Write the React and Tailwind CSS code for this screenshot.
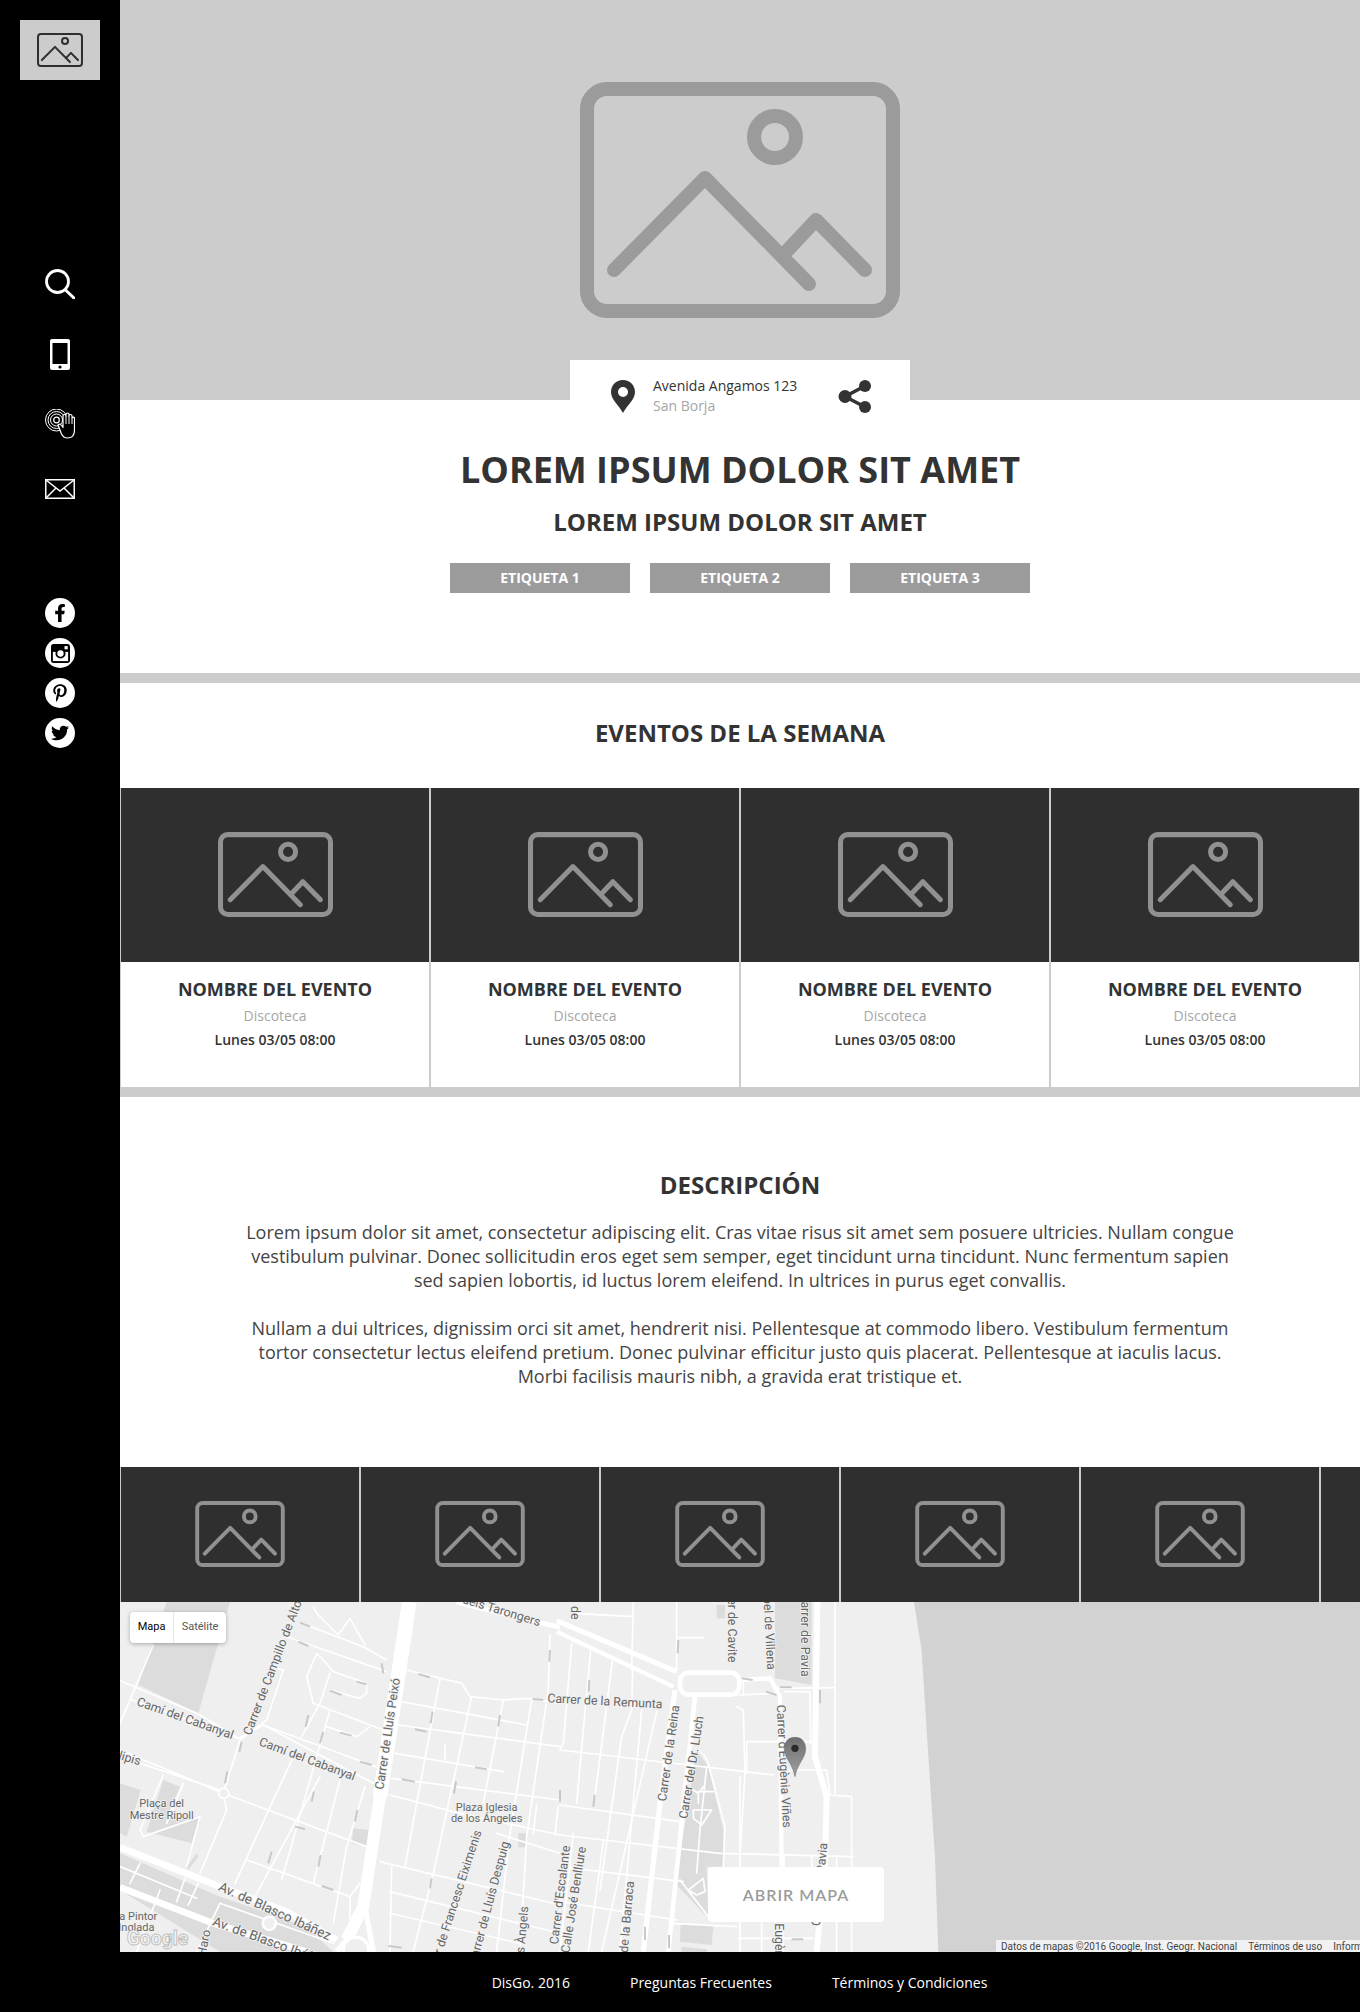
import { FaFacebookF, FaPinterestP, FaTwitter } from 'react-icons/fa';

function Placeholder({ className }) {
  return (
    <svg viewBox="0 0 320 236" fill="none" stroke="currentColor" strokeWidth="14" strokeLinecap="round" strokeLinejoin="round" className={className}>
      <rect x="7" y="7" width="306" height="222" rx="20" />
      <circle cx="195" cy="55" r="21" />
      <path d="M34 188 L125 96 L229 202" />
      <path d="M205 171 L236 138 L285 188" />
    </svg>
  );
}

function InstagramGlyph() {
  return (
    <svg width="19" height="19" viewBox="0 0 18 18">
      <rect width="18" height="18" rx="2.5" fill="black" />
      <rect x="1.8" y="7.5" width="14.4" height="8.7" fill="white" />
      <circle cx="9" cy="9" r="4.8" fill="black" />
      <circle cx="9" cy="9" r="3" fill="white" />
      <rect x="12.8" y="2" width="3" height="3" fill="white" />
    </svg>
  );
}

function SideIcons() {
  return (
    <div className="flex flex-col items-center text-white">
      <svg width="30" height="30" viewBox="0 0 30 30" fill="none" stroke="white" className="mt-[189px]">
        <circle cx="12.5" cy="12.5" r="11" strokeWidth="2.8" />
        <path d="M20.5 21 L29 29" strokeWidth="3" strokeLinecap="round" />
      </svg>
      <svg width="20" height="31" viewBox="0 0 20 31" className="mt-10">
        <rect width="20" height="31" rx="2" fill="white" />
        <rect x="2.5" y="4" width="15" height="21" fill="black" />
        <circle cx="10" cy="28" r="1.6" fill="black" />
      </svg>
      <svg width="30" height="30" viewBox="0 0 30 30" fill="none" stroke="white" className="mt-[39px]">
        <circle cx="11.5" cy="11" r="11" strokeWidth="1" />
        <circle cx="11.5" cy="11" r="8.5" strokeWidth="1" />
        <circle cx="11.5" cy="11" r="6" strokeWidth="1" />
        <circle cx="11.5" cy="11" r="2.8" strokeWidth="1.2" />
        <path d="M13 16 Q15 14 17 17 L18 18.5 L18 7 A1.5 1.5 0 0 1 21 7 L21 5.5 A1.5 1.5 0 0 1 24 5.5 L24 7 A1.5 1.5 0 0 1 27 7 L27 9 A1.3 1.3 0 0 1 29.5 9 L29.5 21 Q29.5 29 22.5 29 Q18.5 29 16.5 25 Z" fill="black" strokeWidth="1.2" strokeLinejoin="round" />
        <path d="M21 7 L21 15 M24 7 L24 15 M27 9 L27 15" strokeWidth="1" />
      </svg>
      <svg width="30" height="20" viewBox="0 0 30 20" fill="none" stroke="white" strokeWidth="1.5" className="mt-10">
        <rect x="0.75" y="0.75" width="28.5" height="18.5" />
        <path d="M1 1 L15 12 L29 1 M1 19 L11 9 M29 19 L19 9" />
      </svg>
      <div className="mt-[99px] flex flex-col gap-2.5">
        <div className="w-[30px] h-[30px] rounded-full bg-white flex items-center justify-center text-black">
          <FaFacebookF size={18} />
        </div>
        <div className="w-[30px] h-[30px] rounded-full bg-white flex items-center justify-center text-black">
          <InstagramGlyph />
        </div>
        <div className="w-[30px] h-[30px] rounded-full bg-white flex items-center justify-center text-black">
          <FaPinterestP size={18} />
        </div>
        <div className="w-[30px] h-[30px] rounded-full bg-white flex items-center justify-center text-black">
          <FaTwitter size={18} />
        </div>
      </div>
    </div>
  );
}

const minor4 = [
  'M0 272 L235 372 L355 445 L430 405 L780 535',
  'M30 328 L355 445',
  'M100 165 L0 400',
  'M430 405 L760 580',
  'M810 615 L1000 665 L1320 735',
  'M490 240 L440 390 L360 450 L310 610 L320 660 L240 850',
  'M490 240 L470 235',
  'M0 480 L310 610 L430 655 L740 770',
  'M0 500 L300 600',
  'M780 815 L1320 945',
  'M545 100 L730 170 L800 210',
  'M500 140 L800 245',
  'M580 50 L590 70 L655 135 M690 85 L655 135 M690 85 L735 165',
  'M860 240 L1025 280 L1050 320 L1150 330 L1230 325 L1320 340',
  'M1150 330 L1090 640',
  'M845 335 L1220 405',
  'M835 405 L1320 470',
  'M825 490 L1150 545',
  'M975 465 L975 510',
  'M815 565 L1320 630',
  'M960 265 L855 830',
  'M1055 320 L940 850 L880 1085',
  'M1235 330 L1170 730 L1130 1085',
  'M1290 135 L1285 300 L1220 740 L1200 1085',
  'M630 250 L600 340 L545 440',
  'M580 340 L560 260 L590 190 L610 210 L640 245 L740 280 L740 310 L720 325 L630 300',
  'M580 340 L790 420',
  'M630 360 L485 870',
  'M620 410 L710 440 L750 410',
  'M600 560 L400 930',
  'M735 590 L680 770 L640 1000',
  'M660 570 L580 880',
  'M520 500 L345 880',
  'M380 810 L690 920',
  'M815 830 L810 1085',
  'M810 905 L1320 1030',
  'M810 970 L1200 1060',
  'M130 555 L60 720 L70 740 L240 680 L200 830',
  'M190 580 L140 700',
  'M120 900 L50 1085',
  'M300 940 L230 1085',
  'M720 880 L690 920 L690 990',
  'M1130 730 L1320 790',
  'M1250 645 L1240 730 M1315 650 L1305 735',
];

const arrows4 = [
  'M540 98 L570 110', 'M535 155 L565 168', 'M785 220 L790 250', 'M895 252 L930 262', 'M1238 327 L1270 330',
  'M1290 180 L1288 215', 'M710 275 L740 283', 'M630 302 L665 315', 'M938 365 L932 400', 'M1140 375 L1135 410',
  'M565 375 L557 410', 'M610 425 L600 460', 'M660 428 L695 437', 'M885 418 L920 425', 'M365 455 L358 485',
  'M322 545 L315 580', 'M720 515 L755 525', 'M1065 532 L1100 538', 'M845 568 L885 575', 'M1008 575 L1002 610',
  'M582 605 L575 635', 'M712 660 L705 695', 'M525 710 L555 717', 'M455 785 L445 820', 'M602 795 L595 830',
  'M605 888 L640 900', 'M935 865 L930 895', 'M805 1068 L845 1073',
];

const minor5 = [
  'M45 70 L220 80', 'M220 36 L215 240', 'M350 36 L350 240', 'M355 143 L430 143',
  'M35 160 L10 460 L0 480', 'M92 180 L50 640', 'M158 205 L105 620', 'M218 240 L215 360 L185 440 L120 900',
  'M0 480 L640 555', 'M530 350 L550 360 L555 550 L540 800', 'M560 455 L560 550', 'M560 455 L750 455',
  'M675 305 L750 305 L752 460', 'M675 540 L800 540 L810 615 L875 620 L875 1085', 'M825 36 L825 610',
  'M530 315 L650 310', 'M540 265 L640 270', 'M650 295 L825 293',
  'M550 270 L550 315', 'M0 645 L360 695', 'M0 735 L480 790 L880 800', 'M0 830 L370 875', 'M0 935 L350 990',
  'M245 360 L180 1085', 'M290 365 L125 1085', 'M40 730 L0 1085', 'M130 755 L85 1085',
  'M410 480 Q440 490 450 540 L495 710 L490 830', 'M440 530 L420 720 L410 850',
  'M400 600 L415 610 L430 590 M415 610 L415 640 M415 605 L460 605',
  'M400 660 L455 660 L425 705 L400 685 Z', 'M360 870 L445 980', 'M385 900 L430 865 L435 905 L410 915 Z',
  'M540 560 L540 1085', 'M605 1000 L605 1085', 'M535 1045 L760 1045', 'M330 1000 L530 1010', 'M672 800 L672 830 M755 800 L755 830', 'M830 800 L830 1085',
];

function StreetMap() {
  const textProps = { fontFamily: 'Roboto, sans-serif', fontSize: 37, fill: '#666', stroke: '#f2f2f2', strokeWidth: 5, paintOrder: 'stroke' };
  return (
    <svg viewBox="0 0 1240 350" width="1240" height="350" className="block">
      <rect width="1240" height="350" fill="#efefef" />
      <g transform="translate(0,-12) scale(0.3333)">
        <g fill="#dcdcdc">
          <path d="M140 36 L330 36 L235 370 L55 285 Z" />
          <path d="M0 580 L62 600 L20 740 L0 730 Z" />
          <path d="M130 570 L180 590 L140 680 L240 680 L215 760 L80 725 Z" />
          <path d="M200 830 L230 790 L235 800 L205 840 Z" />
          <path d="M0 790 L300 920 L560 1010 L640 1085 L300 1085 L0 900 Z" />
          <path d="M700 715 L745 720 L740 770 L695 760 Z" />
          <path d="M1195 730 L1220 730 L1218 772 L1195 772 Z" />
        </g>
        <g fill="none" stroke="#fff" strokeWidth="5" strokeLinecap="round" strokeLinejoin="round">
          {minor4.map((d) => <path key={d} d={d} />)}
          <path d="M30 880 L60 820 M170 935 L195 865 M205 945 L235 880 M0 830 L230 925 M300 940 L640 1060" />
          <circle cx="311" cy="610" r="15" fill="#efefef" />
          <circle cx="448" cy="1000" r="20" fill="#efefef" strokeWidth="7" />
        </g>
        <g fill="none" stroke="#fff" strokeLinejoin="round">
          <path d="M0 772 L300 890 L500 965 L650 1050" strokeWidth="20" />
          <path d="M0 892 L280 1000 L560 1085" strokeWidth="20" />
          <path d="M868 36 L780 620" strokeWidth="44" />
          <path d="M780 620 L748 830 L730 950 L680 1050" strokeWidth="36" />
          <path d="M1010 36 L1320 112" strokeWidth="15" />
          <path d="M735 950 L760 1085 M680 1050 L650 1085" strokeWidth="16" />
          <circle cx="708" cy="1080" r="38" fill="#efefef" strokeWidth="10" />
        </g>
        <g fill="none" stroke="#c8c8c8" strokeWidth="6" strokeLinecap="butt">
          {arrows4.map((d) => <path key={d} d={d} />)}
        </g>
        <g {...textProps}>
          <text transform="translate(48,345) rotate(19.6)">Camí del Cabanyal</text>
          <text transform="translate(415,465) rotate(20.5)">Camí del Cabanyal</text>
          <text transform="translate(392,438) rotate(-69)">Carrer de Campillo de Altobuey</text>
          <text transform="translate(790,600) rotate(-81.5)">Carrer de Lluís Peixó</text>
          <text transform="translate(1025,38) rotate(17)">dels Tarongers</text>
          <text transform="translate(-45,495) rotate(17)">Tulipis</text>
          <text x="125" y="652" textAnchor="middle" fontSize="33">Plaça del</text>
          <text x="125" y="686" textAnchor="middle" fontSize="33">Mestre Ripoll</text>
          <text x="1100" y="662" textAnchor="middle" fontSize="33">Plaza Iglesia</text>
          <text x="1100" y="695" textAnchor="middle" fontSize="33">de los Ángeles</text>
          <text transform="translate(293,900) rotate(24.5)" fontSize="40">Av. de Blasco Ibáñez</text>
          <text transform="translate(275,1005) rotate(20)" fontSize="40">Av. de Blasco Ibáñez</text>
          <text x="-2" y="990" fontSize="33">a Pintor</text>
          <text x="-5" y="1024" fontSize="33">Inglada</text>
          <text transform="translate(1085,725) rotate(-72)" textAnchor="end">Carrer de Francesc Eiximenis</text>
          <text transform="translate(1168,758) rotate(-75)" textAnchor="end">Carrer de Lluís Despuig</text>
          <text transform="translate(1225,950) rotate(-85)" textAnchor="end">dels Àngels</text>
          <text transform="translate(272,1022) rotate(-78)" textAnchor="end">Carrer de Haro</text>
        </g>
        <text x="20" y="1065" fontFamily="Roboto, sans-serif" fontSize="58" fontWeight="700" fill="#f4f4f4" stroke="#bbb" strokeWidth="2.5">Google</text>
      </g>

      <g transform="translate(440,-12) scale(0.3333)">
        <path d="M1062 36 L1085 180 L1100 420 L1125 800 L1135 1085 L1400 1085 L2400 1085 L2400 36 Z" fill="#d2d2d2" />
        <path d="M645 36 L755 36 L755 285 L645 265 Z" fill="#dcdcdc" />
        <path d="M470 45 L495 45 L495 85 L470 85 Z" fill="#dcdcdc" />
        <path d="M410 480 L445 530 L490 720 L490 830 L440 830 L445 985 L345 880 L375 700 Z" fill="#dcdcdc" />
        <path d="M362 1000 L460 1010 L455 1065 L360 1055 Z M365 1070 L440 1078 L440 1090 L365 1090 Z" fill="#dcdcdc" />
        <g fill="none" stroke="#fff" strokeWidth="5" strokeLinecap="round" strokeLinejoin="round">
          {minor5.map((d) => <path key={d} d={d} />)}
        </g>
        <g fill="none" stroke="#fff" strokeLinejoin="round">
          <path d="M-10 92 L350 245" strokeWidth="15" />
          <path d="M-10 125 L340 290" strokeWidth="13" />
          <rect x="360" y="248" width="178" height="66" rx="26" strokeWidth="14" />
          <path d="M538 270 L630 265 L660 320 L665 830 M665 1000 L665 1085" strokeWidth="13" />
          <path d="M772 36 L765 500 L800 620 L795 830 L770 1085" strokeWidth="18" />
          <path d="M345 300 L300 640 L250 1085" strokeWidth="16" />
          <path d="M405 320 L365 700 L325 1085" strokeWidth="14" />
        </g>
        <g fill="none" stroke="#c8c8c8" strokeWidth="6">
          <path d="M355 150 L353 190 M88 270 L86 305 M780 300 L780 340 M0 600 L0 635 M104 615 L100 650" />
          <path d="M545 265 L578 270 M660 292 L695 292 M618 305 L650 315 M695 1048 L730 1048 M255 1010 L255 1050 M327 1035 L327 1075" />
        </g>
        <g {...textProps}>
          <text transform="translate(307,355) rotate(3)" textAnchor="end">Carrer de la Remunta</text>
          <text transform="translate(318,635) rotate(-82)">Carrer de la Reina</text>
          <text transform="translate(382,688) rotate(-81)">Carrer del Dr. Lluch</text>
          <text transform="translate(650,345) rotate(87)">Carrer d'Eugènia Viñes</text>
          <text transform="translate(505,218) rotate(90)" textAnchor="end">Carrer de Cavite</text>
          <text transform="translate(622,240) rotate(87)" textAnchor="end">Isabel de Villena</text>
          <text transform="translate(724,260) rotate(90)" textAnchor="end">Carrer de Pavia</text>
          <text transform="translate(802,760) rotate(-85)" textAnchor="end">Carrer de Pavia</text>
          <text transform="translate(645,1000) rotate(90)">Eugènia</text>
          <text transform="translate(33,48) rotate(90)">de</text>
          <text transform="translate(30,768) rotate(-83)" textAnchor="end">Carrer d'Escalante</text>
          <text transform="translate(78,772) rotate(-81)" textAnchor="end">Calle José Benlliure</text>
          <text transform="translate(222,875) rotate(-85)" textAnchor="end">Carrer de la Barraca</text>
        </g>
        <defs>
          <linearGradient id="pin" x1="0" y1="0" x2="0" y2="1">
            <stop offset="0" stopColor="#6e6e6e" />
            <stop offset="1" stopColor="#a0a0a0" />
          </linearGradient>
        </defs>
        <path d="M705 442 C680 442 673 462 673 476 C673 505 698 520 705 560 C712 520 737 505 737 476 C737 462 730 442 705 442 Z" fill="url(#pin)" stroke="#666" strokeWidth="1.5" />
        <circle cx="705" cy="475" r="11" fill="#2a2a2a" />
      </g>
    </svg>
  );
}

function EventCard() {
  return (
    <div className="w-[310px] h-[299px] border-x border-[#ccc] text-center">
      <div className="h-[174px] pb-[2px] bg-[#2f2f2f] flex items-center justify-center text-[#919191]">
        <Placeholder className="w-[115px] h-[85px]" />
      </div>
      <div className="pt-[15px] text-[18px] leading-[24px] font-bold text-[#333]">NOMBRE DEL EVENTO</div>
      <div className="mt-[5px] text-[14px] leading-[20px] text-[#a6a6a6]">Discoteca</div>
      <div className="mt-[4px] text-[14px] leading-[20px] font-semibold text-[#333]">Lunes 03/05 08:00</div>
    </div>
  );
}

export default function App() {
  return (
    <div className="w-[1360px] h-[2012px] flex font-['Open_Sans',sans-serif] text-[#333] bg-white overflow-hidden">
      <aside className="w-[120px] shrink-0 bg-black flex flex-col items-center pt-5">
        <div className="w-20 h-[60px] bg-[#ccc] flex items-center justify-center text-[#2f2f2f]">
          <Placeholder className="w-[46px] h-[34px]" />
        </div>
        <SideIcons />
      </aside>

      <main className="w-[1240px] flex flex-col">
        <div className="h-[400px] shrink-0 bg-[#ccc] flex justify-center pt-[82px] text-[#9b9b9b]">
          <Placeholder className="w-[320px] h-[236px]" />
        </div>

        <section className="h-[273px] shrink-0 flex flex-col items-center">
          <div className="relative -mt-10 w-[340px] h-20 bg-white flex items-center pl-[41px] pb-2">
            <svg width="24" height="33" viewBox="0 0 24 33">
              <path fillRule="evenodd" d="M12 0 C5 0 0 5.5 0 12 C0 20 8 25 12 33 C16 25 24 20 24 12 C24 5.5 19 0 12 0 Z M12 7 A5 5 0 1 1 12 17 A5 5 0 1 1 12 7 Z" fill="currentColor" />
            </svg>
            <div className="ml-[18px] w-[185px] text-[14px] leading-[20px]">
              <div>Avenida Angamos 123</div>
              <div className="text-[#a6a6a6]">San Borja</div>
            </div>
            <svg width="34" height="33" viewBox="0 0 34 33">
              <path d="M27 6 L7 16.5 L27 27" fill="none" stroke="currentColor" strokeWidth="3.5" />
              <circle cx="27" cy="6" r="6" fill="currentColor" />
              <circle cx="7" cy="16.5" r="6.5" fill="currentColor" />
              <circle cx="27" cy="27" r="6" fill="currentColor" />
            </svg>
          </div>
          <h1 className="mt-[8px] text-[36px] leading-[44px] font-bold">LOREM IPSUM DOLOR SIT AMET</h1>
          <h2 className="mt-[14px] text-[24px] leading-[32px] font-bold">LOREM IPSUM DOLOR SIT AMET</h2>
          <div className="mt-[25px] flex gap-5">
            {['ETIQUETA 1', 'ETIQUETA 2', 'ETIQUETA 3'].map((tag) => (
              <div key={tag} className="w-[180px] h-[30px] pb-[2px] bg-[#9b9b9b] text-white text-[14px] font-bold flex items-center justify-center">
                {tag}
              </div>
            ))}
          </div>
        </section>

        <div className="h-2.5 shrink-0 bg-[#ccc]" />

        <h2 className="pt-[34px] pb-[39px] text-center text-[24px] leading-[32px] font-bold">EVENTOS DE LA SEMANA</h2>
        <div className="flex shrink-0">
          <EventCard />
          <EventCard />
          <EventCard />
          <EventCard />
        </div>

        <div className="h-2.5 shrink-0 bg-[#ccc]" />

        <section className="h-[370px] shrink-0 pt-[72px] text-center">
          <h2 className="text-[24px] leading-[32px] font-bold">DESCRIPCIÓN</h2>
          <div className="mt-[19px] mx-auto w-[1000px] text-[18px] leading-[24px] text-[#444]">
            <p>
              Lorem ipsum dolor sit amet, consectetur adipiscing elit. Cras vitae risus sit amet sem posuere ultricies. Nullam congue vestibulum pulvinar. Donec sollicitudin eros eget sem semper, eget tincidunt urna tincidunt. Nunc fermentum sapien sed sapien lobortis, id luctus lorem eleifend. In ultrices in purus eget convallis.
            </p>
            <p className="mt-6">
              Nullam a dui ultrices, dignissim orci sit amet, hendrerit nisi. Pellentesque at commodo libero. Vestibulum fermentum tortor consectetur lectus eleifend pretium. Donec pulvinar efficitur justo quis placerat. Pellentesque at iaculis lacus. Morbi facilisis mauris nibh, a gravida erat tristique et.
            </p>
          </div>
        </section>

        <div className="h-[135px] shrink-0 flex overflow-hidden">
          {[0, 1, 2, 3, 4, 5].map((i) => (
            <div key={i} className="w-[240px] shrink-0 pb-[2px] bg-[#2f2f2f] border-x border-[#ccc] flex items-center justify-center text-[#919191]">
              <Placeholder className="w-[90px] h-[66px]" />
            </div>
          ))}
        </div>

        <div className="relative h-[350px] shrink-0 overflow-hidden">
          <StreetMap />
          <div className="absolute left-[10px] top-[10px] h-[31px] flex items-center bg-white rounded-sm shadow-[0_1px_4px_rgba(0,0,0,0.3)] font-['Roboto',sans-serif] text-[11px]">
            <span className="w-[44px] h-full flex items-center justify-center text-black border-r border-[#e6e6e6]">Mapa</span>
            <span className="w-[52px] flex items-center justify-center text-[#565656]">Satélite</span>
          </div>
          <div className="absolute left-[588px] top-[265px] w-[176px] h-[55px] bg-white rounded flex items-center justify-center font-['Lato',sans-serif] text-[16px] font-semibold tracking-[1px] text-[#9b9b9b]">
            ABRIR MAPA
          </div>
          <div className="absolute right-0 bottom-0 w-[364px] h-[12px] pl-[5px] bg-[#f1f1f1] flex items-center gap-[11px] whitespace-nowrap overflow-hidden font-['Roboto',sans-serif] text-[10px] text-[#444]">
            <span>Datos de mapas ©2016 Google, Inst. Geogr. Nacional</span>
            <span>Términos de uso</span>
            <span>Informar de un error</span>
          </div>
        </div>

        <footer className="h-[60px] shrink-0 bg-black flex items-center justify-center gap-[60px] pr-[1px] text-[14px] text-white">
          <span>DisGo. 2016</span>
          <span>Preguntas Frecuentes</span>
          <span>Términos y Condiciones</span>
        </footer>
      </main>
    </div>
  );
}
